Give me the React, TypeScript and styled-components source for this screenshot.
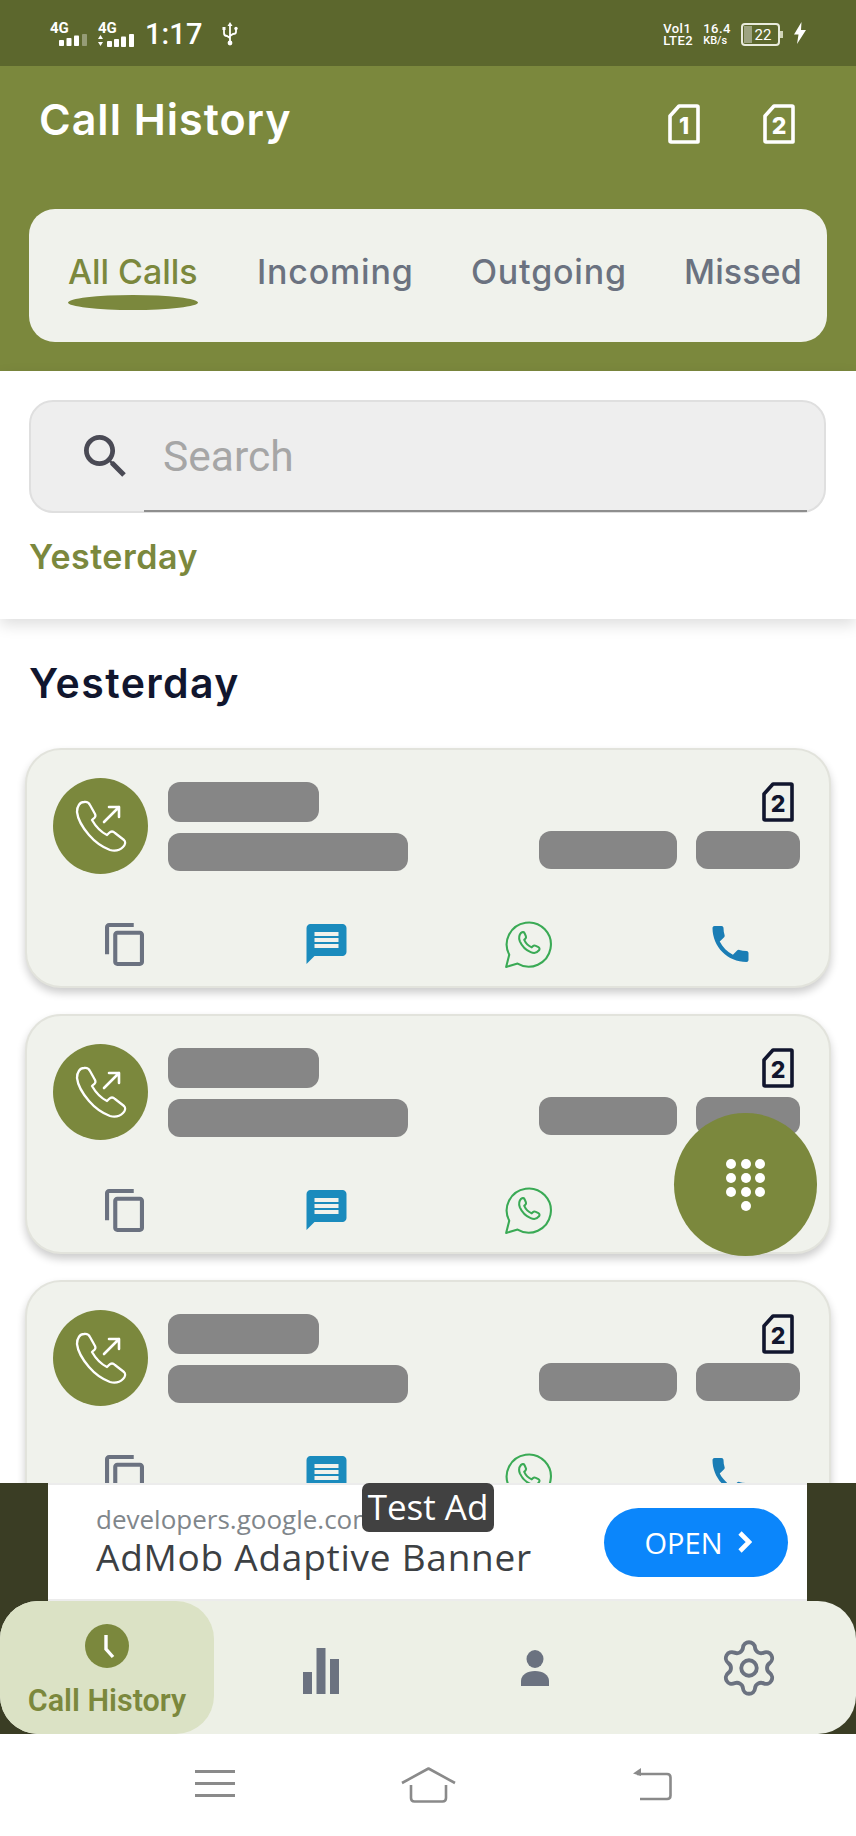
import React from "react";
import styled, { createGlobalStyle } from "styled-components";
import { Settings } from "lucide-react";

const Global = createGlobalStyle`
  html, body { margin: 0; padding: 0; background: #fff; }
  * { box-sizing: border-box; }
`;
const GREEN = "#7b883d";
const SLATE = "#6b7280";
const Page = styled.div`
  position: relative; width: 856px; height: 1836px; display: flex; flex-direction: column;
  overflow: hidden; background: #fff; font-family: Inter, "Liberation Sans", sans-serif;
`;
const StatusBar = styled.div`
  height: 66px; flex: none; background: #5c672d; color: #fff; display: flex; align-items: flex-start;
  justify-content: space-between; padding: 22px 50px 0 50px; font-family: Roboto, sans-serif;
`;
const StatusGroup = styled.div`display: flex; align-items: flex-start;`;
const Signal = styled.div<{ $w: number; $indent: number }>`
  width: ${p => p.$w}px; padding-top: 1px; display: flex; flex-direction: column; align-items: flex-start;
  svg { margin-left: ${p => p.$indent}px; }
`;
const SignalLabel = styled.span`font-size: 15px; line-height: 11px; font-weight: 700; letter-spacing: -.2px;`;
const Clock = styled.span`font-size: 29px; line-height: 24px; font-weight: 500; letter-spacing: .1px; margin-right: 18px;`;
const TwoLine = styled.div<{ $m: number }>`
  display: flex; flex-direction: column; margin-right: ${p => p.$m}px; margin-top: 1px;
  font-size: 13px; line-height: 12px; font-weight: 500; letter-spacing: .5px;
`;
const SmallUnit = styled.span`font-size: 11px; line-height: 12px; letter-spacing: 0;`;
const Battery = styled.div`
  position: relative; width: 39px; height: 23px; border: 2px solid #e9ebdd; border-radius: 4px; margin-right: 14px; margin-top: 1px;
  display: flex; align-items: center; justify-content: center; font-size: 15px; padding-left: 5px;
  &::before { content: ""; position: absolute; left: 1px; top: 1px; bottom: 1px; width: 8px; background: rgba(255,255,255,.4); }
  &::after { content: ""; position: absolute; right: -5px; top: 6px; width: 3px; height: 7px; background: #cfd3b8; }
`;
const Header = styled.header`
  height: 305px; flex: none; background: ${GREEN}; padding: 0 29px 29px; display: flex; flex-direction: column; justify-content: space-between;
`;
const TitleRow = styled.div`display: flex; align-items: flex-start; padding: 28px 32px 0 10px;`;
const Title = styled.h1`
  margin: 0; font-size: 43px; line-height: 50px; font-weight: 600; color: #fff; letter-spacing: 1px;
`;
const HeaderSims = styled.div`display: flex; gap: 63px; margin-left: auto; margin-top: 10px;`;
const TabsPanel = styled.nav`
  height: 133px; background: #f0f2ec; border-radius: 26px; display: grid; grid-template-columns: 189px 214px 213px auto;
  align-items: start; justify-items: start; padding: 42px 0 0 39px;
`;
const Tab = styled.div<{ $active?: boolean; $track: number }>`
  display: flex; flex-direction: column; align-items: stretch; font-size: 34px; line-height: 42px; font-weight: 500;
  letter-spacing: ${p => p.$track}px;
  color: ${p => (p.$active ? GREEN : SLATE)};
`;
const TabMark = styled.div`height: 15px; margin-top: 2px; background: ${GREEN}; border-radius: 50%;`;
const SearchSection = styled.section`
  height: 248px; flex: none; padding: 29px 30px 0 29px; background: #fff; position: relative; z-index: 2;
  box-shadow: 0 6px 14px rgba(0,0,0,.13);
`;
const SearchBox = styled.div`
  position: relative; height: 113px; background: #eeeeee; border: 2px solid #dfdfdf; border-radius: 24px;
  display: flex; align-items: center; padding: 0 0 0 53px; gap: 36px;
  &::after { content: ""; position: absolute; left: 113px; right: 17px; bottom: -1px; height: 2px; background: #8e8e8e; }
`;
const SearchText = styled.span`font-family: Roboto, sans-serif; font-size: 42.5px; color: #a6a6a6; line-height: 50px;`;
const SearchFilter = styled.div`
  margin-top: 22px; font-size: 34px; line-height: 44px; font-weight: 600; color: ${GREEN}; letter-spacing: .5px;
`;
const Feed = styled.main`flex: 1; min-height: 0; overflow: hidden; padding: 40px 25px 0; background: #fff;`;
const FeedTitle = styled.h2`
  margin: 0 0 41px 4px; font-size: 41px; line-height: 48px; font-weight: 600; color: #11162e; letter-spacing: 1.4px;
`;
const Card = styled.article`
  height: 240px; flex: none; border-radius: 36px; background: #f0f2ec; border: 2px solid #e2e3dc; margin-bottom: 26px;
  box-shadow: 0 5px 8px rgba(0,0,0,.2); padding: 28px 29px 0 26px;
`;
const CardTop = styled.div`display: flex; height: 96px;`;
const Avatar = styled.div`
  width: 95px; height: 96px; flex: none; border-radius: 50%; background: ${GREEN}; display: flex; align-items: center; justify-content: center;
`;
const Left = styled.div`display: flex; flex-direction: column; gap: 11px; margin: 4px 0 0 20px;`;
const Right = styled.div`display: flex; flex-direction: column; align-items: flex-end; margin: 4px 0 0 auto;`;
const Pill = styled.div<{ $w: number; $h: number }>`
  width: ${p => p.$w}px; height: ${p => p.$h}px; background: #868686; border-radius: 12px;
`;
const SimSlot = styled.div`height: 49px; padding-right: 6px; color: #11162e;`;
const Pills = styled.div`display: flex; gap: 19px;`;
const Actions = styled.div`
  display: grid; grid-template-columns: repeat(4, 202px); margin: 45px 0 0 -30px; height: 48px; align-items: center; justify-items: center;
`;
const AdArea = styled.div`flex: none; background: #3a3d24; position: relative; z-index: 3;`;
const AdPanel = styled.div`
  position: relative; margin: 0 49px 0 48px; height: 118px; background: #fff; border-top: 2px solid #ececec; border-bottom: 2px solid #ececec;
  display: flex; align-items: center; padding: 0 19px 0 48px; font-family: "Open Sans", sans-serif;
`;
const AdText = styled.div`display: flex; flex-direction: column; padding-bottom: 8px;`;
const AdHost = styled.span`font-size: 26px; line-height: 38px; color: #80868b; white-space: nowrap;`;
const AdTitle = styled.span`font-size: 37px; line-height: 38px; color: #3c4043; white-space: nowrap; letter-spacing: .75px;`;
const AdBadge = styled.div`
  position: absolute; left: 314px; top: -2px; width: 132px; height: 49px; background: #414141; border-radius: 7px; color: #fff;
  font-size: 35px; line-height: 47px; text-align: center;
`;
const OpenButton = styled.div`
  margin-left: auto; width: 184px; height: 69px; border-radius: 35px; background: #0b86fb; color: #fff; display: flex; align-items: center;
  justify-content: center; gap: 15px; font-size: 29px; flex: none; padding-left: 5px;
`;
const BottomNav = styled.nav`
  height: 133px; background: #edf0e6; border-radius: 38px; display: grid; grid-template-columns: repeat(4, 214px);
`;
const NavItem = styled.div<{ $active?: boolean; $drop?: number }>`
  display: flex; flex-direction: column; align-items: center; justify-content: ${p => (p.$active ? "flex-start" : "center")};
  border-radius: 38px; padding-top: ${p => (p.$active ? 23 : p.$drop ?? 0)}px;
  background: ${p => (p.$active ? "#dbe2c5" : "transparent")}; color: ${SLATE};
`;
const NavLabel = styled.span`
  font-family: Roboto, sans-serif; font-size: 30.5px; line-height: 34px; margin-top: 16px; font-weight: 600; color: ${GREEN}; white-space: nowrap;
`;
const SystemNav = styled.div`
  height: 102px; flex: none; display: grid; grid-template-columns: 214px 212px 236px; padding: 33px 0 0 108px; align-items: start; justify-items: center; background: #fff;
`;
const Fab = styled.button`
  position: absolute; left: 674px; top: 1113px; width: 143px; height: 143px; border: 0; border-radius: 50%; background: ${GREEN}; z-index: 2;
  display: grid; grid-template-columns: repeat(3, 10px); gap: 4px; column-gap: 4.5px; align-content: center; justify-content: center; padding: 0;
`;
const Dot = styled.i<{ $col?: number }>`
  width: 10px; height: 10px; border-radius: 50%; background: #fff; grid-column: ${p => p.$col ?? "auto"};
`;

const Sim = ({ n, color = "#fff" }: { n: string; color?: string }) => (
  <svg width="32" height="40" viewBox="0 0 32 40" fill="none" stroke={color}>
    <path d="M2 12 L11 2 H29 Q30 2 30 3 V38 H3 Q2 38 2 37 Z" strokeWidth="3.6" strokeLinejoin="round" />
    <text x="16" y="30" textAnchor="middle" fontFamily="Inter, sans-serif" fontWeight="800" fontSize="23" fill={color} stroke="none">{n}</text>
  </svg>
);
const BarsOne = () => (
  <svg width="29" height="12" viewBox="0 0 29 12" fill="#fff">
    <rect x="0" y="6" width="5" height="6" rx=".8" />
    <rect x="7.5" y="4" width="5" height="8" rx=".8" />
    <rect x="15" y="1.5" width="5" height="10.5" rx=".8" />
    <rect x="23" y="0" width="5" height="12" rx=".8" opacity=".35" />
  </svg>
);
const BarsTwo = () => (
  <svg width="37" height="13" viewBox="0 0 37 13" fill="#fff">
    <path d="M0 5l2.5-4L5 5zM0 8l2.5 4L5 8z" />
    <rect x="9" y="7" width="5" height="6" rx=".8" />
    <rect x="16" y="5" width="5" height="8" rx=".8" />
    <rect x="23" y="2.5" width="5" height="10.5" rx=".8" />
    <rect x="31" y="0" width="5" height="13" rx=".8" />
  </svg>
);
const Usb = () => (
  <svg width="18" height="24" viewBox="0 0 18 24" fill="none" stroke="#fff" strokeWidth="1.8">
    <path d="M9 3v17M3 7v4q0 3 3 3l3 2M15 7v3q0 2-3 2l-3 2" />
    <path d="M9 0l2.5 4h-5z" fill="#fff" stroke="none" />
    <circle cx="9" cy="21" r="2.4" fill="#fff" stroke="none" />
    <rect x="1.5" y="5" width="3" height="3" fill="#fff" stroke="none" />
    <circle cx="15" cy="6.5" r="1.7" fill="#fff" stroke="none" />
  </svg>
);
const Bolt = () => (
  <svg width="12" height="22" viewBox="0 0 12 22" fill="#fff"><path d="M7.5 0L0 12.5h4.5L3 22l9-14H7z" /></svg>
);
const SearchIcon = () => (
  <svg width="43" height="43" viewBox="3 3 18 18" fill="#4a4a55">
    <path d="M15.5 14h-.79l-.28-.27C15.41 12.59 16 11.11 16 9.5 16 5.91 13.09 3 9.5 3S3 5.91 3 9.5 5.91 16 9.5 16c1.61 0 3.09-.59 4.23-1.57l.27.28v.79l5 4.99L20.49 19l-4.99-5zm-6 0C7.01 14 5 11.99 5 9.5S7.01 5 9.5 5 14 7.01 14 9.5 11.99 14 9.5 14z" />
  </svg>
);
const CallOut = () => (
  <svg width="52" height="52" viewBox="0 0 52 52" fill="none" stroke="#fff" strokeWidth="2.3" strokeLinecap="round" strokeLinejoin="round">
    <path d="M2 12C2 6 5 2 9 2c3-.5 5 1 6 3l5 9c1 2 0 4-2 5l-1 1c4 7 9 12 15 15l2-2c2-2 4-2 6 0l9 7c2 2 1 5-1 7-4 4-9 4-13 3-8-3-15-8-21-15C8 28 3 21 2 12z" />
    <path d="M29 22L44 7M34 7h10v10" strokeWidth="2.6" />
  </svg>
);
const CopyIcon = () => (
  <svg width="39" height="43" viewBox="2 1 19 22" preserveAspectRatio="none" fill={SLATE}>
    <path d="M16 1H4c-1.1 0-2 .9-2 2v14h2V3h12V1zm3 4H8c-1.1 0-2 .9-2 2v14c0 1.1.9 2 2 2h11c1.1 0 2-.9 2-2V7c0-1.1-.9-2-2-2zm0 16H8V7h11v14z" />
  </svg>
);
const MessageIcon = () => (
  <svg width="41" height="40" viewBox="2 2 20 20" fill="#1a8bbd">
    <path d="M20 2H4c-1.1 0-1.99.9-1.99 2L2 22l4-4h14c1.1 0 2-.9 2-2V4c0-1.1-.9-2-2-2zm-2 12H6v-2h12v2zm0-3H6V9h12v2zm0-3H6V6h12v2z" />
  </svg>
);
const WhatsappIcon = () => (
  <svg width="50" height="50" viewBox="0 0 24 24" fill="none" stroke="#3aaa55" strokeWidth="1" strokeLinejoin="round" strokeLinecap="round">
    <path d="M1.5 23 L3 17.2 A10.6 10.6 0 1 1 7 21.4 Z" />
    <path d="M8.7 6.6 c.7-.5 1.4-.4 1.7.3 l.6 1.4 c.2.5 0 .9-.4 1.3 l-.4.4 c.7 1.6 2 2.9 3.6 3.6 l.5-.5 c.4-.4.8-.5 1.2-.3 l1.5.7 c.6.3.7 1 .2 1.6 -.9 1.2-2.4 1.5-3.9.8 -2.5-1.1-4.2-2.9-5.2-5.2 -.6-1.5-.4-3 .6-4.1 z" />
  </svg>
);
const PhoneIcon = () => (
  <svg width="37" height="36" viewBox="3 3 18 18" fill="#1a7db5">
    <path d="M6.62 10.79c1.44 2.83 3.76 5.14 6.59 6.59l2.2-2.2c.27-.27.67-.36 1.02-.24 1.12.37 2.33.57 3.57.57.55 0 1 .45 1 1V20c0 .55-.45 1-1 1-9.39 0-17-7.61-17-17 0-.55.45-1 1-1h3.5c.55 0 1 .45 1 1 0 1.25.2 2.45.57 3.57.11.35.03.74-.25 1.02l-2.2 2.2z" />
  </svg>
);
const Chevron = () => (
  <svg width="15" height="24" viewBox="0 0 15 24" fill="none" stroke="#fff" strokeWidth="4.6" strokeLinejoin="miter">
    <path d="M3 3l9 9-9 9" />
  </svg>
);
const ClockIcon = () => (
  <svg width="44" height="44" viewBox="0 0 44 44">
    <circle cx="22" cy="22" r="22" fill={GREEN} />
    <path d="M21 11v14l7 8" fill="none" stroke="#fff" strokeWidth="3.4" />
  </svg>
);
const StatsIcon = () => (
  <svg width="36" height="46" viewBox="0 0 36 46" fill={SLATE}>
    <rect x="0" y="24" width="9" height="22" /><rect x="13.5" y="0" width="9" height="46" /><rect x="27" y="11" width="9" height="35" />
  </svg>
);
const PersonIcon = () => (
  <svg width="28" height="36" viewBox="0 0 28 36" fill={SLATE}>
    <ellipse cx="14" cy="9" rx="8.5" ry="9" />
    <path d="M0 36v-5c0-6 6-10 14-10s14 4 14 10v5z" />
  </svg>
);
const MenuIcon = () => (
  <svg width="40" height="30" viewBox="0 0 40 30" fill="#8a8a8a"><rect y="3" width="40" height="3" /><rect y="15" width="40" height="3" /><rect y="27" width="40" height="3" /></svg>
);
const HomeIcon = () => (
  <svg width="55" height="36" viewBox="0 0 55 36" fill="none" stroke="#8a8a8a" strokeWidth="2.6" strokeLinejoin="round">
    <path d="M1 16L27.5 1.5 54 16" /><path d="M10 18v13q0 3.5 3.5 3.5h28q3.5 0 3.5-3.5V18" />
  </svg>
);
const BackIcon = () => (
  <svg width="40" height="34" viewBox="0 0 40 34" fill="none" stroke="#8a8a8a" strokeWidth="2.6" strokeLinejoin="round">
    <path d="M5 7h30q3.5 0 3.5 3.5v18q0 3.5-3.5 3.5H8" /><path d="M9 1L1 6.5 9 9z" fill="#8a8a8a" stroke="none" />
  </svg>
);

const CallCard = () => (
  <Card>
    <CardTop>
      <Avatar><CallOut /></Avatar>
      <Left><Pill $w={151} $h={40} /><Pill $w={240} $h={38} /></Left>
      <Right>
        <SimSlot><Sim n="2" color="#11162e" /></SimSlot>
        <Pills><Pill $w={138} $h={38} /><Pill $w={104} $h={38} /></Pills>
      </Right>
    </CardTop>
    <Actions><CopyIcon /><MessageIcon /><WhatsappIcon /><PhoneIcon /></Actions>
  </Card>
);

export default function App() {
  return (
    <Page>
      <Global />
      <StatusBar>
        <StatusGroup>
          <Signal $w={48} $indent={9}><SignalLabel>4G</SignalLabel><BarsOne /></Signal>
          <Signal $w={47} $indent={0}><SignalLabel>4G</SignalLabel><BarsTwo /></Signal>
          <Clock>1:17</Clock>
          <Usb />
        </StatusGroup>
        <StatusGroup>
          <TwoLine $m={10}><span>Vol1</span><span>LTE2</span></TwoLine>
          <TwoLine $m={10}><span>16.4</span><SmallUnit>KB/s</SmallUnit></TwoLine>
          <Battery>22</Battery>
          <Bolt />
        </StatusGroup>
      </StatusBar>
      <Header>
        <TitleRow>
          <Title>Call History</Title>
          <HeaderSims><Sim n="1" /><Sim n="2" /></HeaderSims>
        </TitleRow>
        <TabsPanel>
          <Tab $active $track={-0.05}>All Calls<TabMark /></Tab>
          <Tab $track={0.8}>Incoming</Tab>
          <Tab $track={0.8}>Outgoing</Tab>
          <Tab $track={0.1}>Missed</Tab>
        </TabsPanel>
      </Header>
      <SearchSection>
        <SearchBox><SearchIcon /><SearchText>Search</SearchText></SearchBox>
        <SearchFilter>Yesterday</SearchFilter>
      </SearchSection>
      <Feed>
        <FeedTitle>Yesterday</FeedTitle>
        <CallCard /><CallCard /><CallCard />
      </Feed>
      <Fab aria-label="Dial pad">
        {Array.from({ length: 9 }, (_, i) => <Dot key={i} />)}
        <Dot $col={2} />
      </Fab>
      <AdArea>
        <AdPanel>
          <AdText><AdHost>developers.google.com</AdHost><AdTitle>AdMob Adaptive Banner</AdTitle></AdText>
          <AdBadge>Test Ad</AdBadge>
          <OpenButton>OPEN<Chevron /></OpenButton>
        </AdPanel>
        <BottomNav>
          <NavItem $active><ClockIcon /><NavLabel>Call History</NavLabel></NavItem>
          <NavItem $drop={6}><StatsIcon /></NavItem>
          <NavItem><PersonIcon /></NavItem>
          <NavItem><Settings size={62} strokeWidth={1.5} /></NavItem>
        </BottomNav>
      </AdArea>
      <SystemNav><MenuIcon /><HomeIcon /><BackIcon /></SystemNav>
    </Page>
  );
}
